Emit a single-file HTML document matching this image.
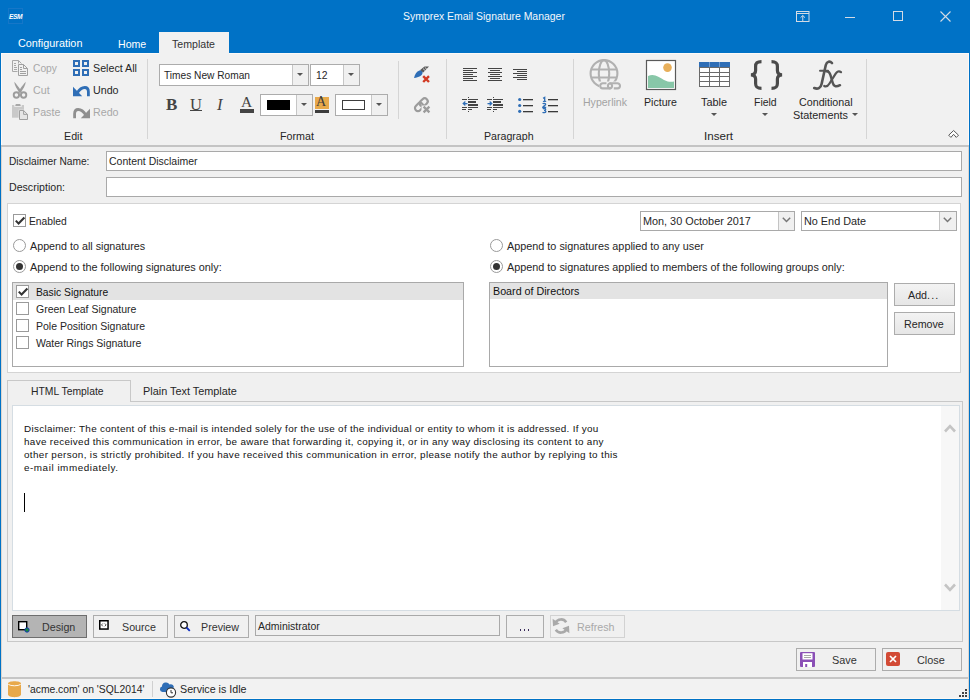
<!DOCTYPE html>
<html><head><meta charset="utf-8">
<style>
*{margin:0;padding:0;box-sizing:border-box}
html,body{width:970px;height:700px;overflow:hidden;background:#f0f0f0}
body{position:relative;font-family:"Liberation Sans",sans-serif;font-size:10.7px;color:#222}
.a{position:absolute}
.t{position:absolute;white-space:nowrap;line-height:14px;font-size:10.7px;color:#262626}
.bx{position:absolute;border:1px solid #acacac;background:#fff}
.chk{position:absolute;width:13px;height:13px;border:1px solid #9a9a9a;background:#fff}
.rad{position:absolute;width:13px;height:13px;border:1px solid #9a9a9a;border-radius:50%;background:#fff}
.sep{position:absolute;width:1px;background:#d5d5d5}
.dd{position:absolute;width:0;height:0;border-left:3px solid transparent;border-right:3px solid transparent;border-top:3px solid #555}
svg{position:absolute;overflow:visible}
</style></head><body>

<!-- window frame -->
<div class="a" style="left:0;top:0;width:970px;height:53px;background:#0072c6"></div>
<div class="a" style="left:0;top:0;width:1px;height:700px;background:#0072c6"></div>
<div class="a" style="left:969px;top:0;width:1px;height:700px;background:#0072c6"></div>
<div class="a" style="left:0;top:699px;width:970px;height:1px;background:#0072c6"></div>
<div class="a" style="left:1px;top:698px;width:968px;height:1px;background:#fcf9f4"></div>

<!-- title bar -->
<div class="a" style="left:8px;top:8px;width:15px;height:16px;background:#0070c4;border:1px solid #1677c8"></div>
<div class="t" style="left:9px;top:10px;font-size:6.6px;line-height:13px;color:#fff;font-style:italic;font-weight:bold;letter-spacing:-0.4px">ESM</div>
<div class="t" style="left:403px;top:10px;font-size:10.45px;color:#f4f7fb">Symprex Email Signature Manager</div>

<!-- ribbon tabs -->
<div class="t" style="left:18px;top:36px;font-size:10.84px;color:#fff">Configuration</div>
<div class="t" style="left:118px;top:37px;font-size:10.6px;color:#fff">Home</div>
<div class="a" style="left:159px;top:32px;width:70px;height:22px;background:#f1f1f1"></div>
<div class="t" style="left:172px;top:37px;font-size:10.6px;color:#333">Template</div>

<!-- ribbon body -->
<div class="a" style="left:1px;top:53px;width:968px;height:92px;background:#f1f1f1"></div>
<div class="a" style="left:1px;top:145px;width:968px;height:2px;background:#c4c4c4"></div>


<!-- EDIT group -->
<svg style="left:12px;top:60px" width="17" height="17" viewBox="0 0 17 17">
 <g fill="none" stroke="#a8a8a8">
 <path d="M0.5 11.5V0.5H6.5L9.5 3.5M6.5 0.5V3.5M0.5 11.5H5.5"/>
 </g>
 <g fill="#a8a8a8"><rect x="2" y="3" width="2" height="1"/><rect x="2" y="5" width="2" height="1"/><rect x="2" y="7" width="3" height="1"/><rect x="2" y="9" width="3" height="1"/></g>
 <path d="M6.5 4.5V15.5H15.5V8.5L11.5 4.5Z" fill="#f1f1f1" stroke="#a0a0a0"/>
 <path d="M11.5 4.5V8.5H15.5" fill="none" stroke="#a0a0a0"/>
 <g fill="#a0a0a0"><rect x="8" y="7" width="2" height="1"/><rect x="8" y="9" width="2" height="1"/><rect x="8" y="11" width="6" height="1"/><rect x="8" y="13" width="6" height="1"/></g>
</svg>
<svg style="left:10px;top:80px" width="20" height="20" viewBox="0 0 20 20">
 <path d="M4.2 1.8C5.8 3.2 9 7.5 11.6 11.6L9.6 13C6.8 9.2 4.6 5.2 4.2 1.8Z" fill="#9c9c9c"/>
 <path d="M15.8 1.8C14.2 3.2 11 7.5 8.4 11.6L10.4 13C13.2 9.2 15.4 5.2 15.8 1.8Z" fill="#9c9c9c"/>
 <circle cx="6.4" cy="15" r="2.7" fill="none" stroke="#9c9c9c" stroke-width="1.9"/>
 <circle cx="13.6" cy="15" r="2.7" fill="none" stroke="#9c9c9c" stroke-width="1.9"/>
</svg>
<svg style="left:12px;top:103px" width="17" height="17" viewBox="0 0 17 17">
 <rect x="0" y="2" width="12" height="12.7" fill="#c9c9c9"/>
 <rect x="2.3" y="1" width="7.4" height="2.8" fill="#f1f1f1"/>
 <path d="M3.2 3H8.8L8.2 1H3.8Z" fill="#a8a8a8"/>
 <path d="M7.5 7.5H11.6L15.5 11.4V16.5H7.5Z" fill="#e6e6e6" stroke="#f1f1f1" stroke-width="1.6"/>
 <path d="M7.5 7.5H11.6L15.5 11.4V16.5H7.5Z" fill="#e6e6e6" stroke="#a0a0a0"/>
 <path d="M11.6 7.5V11.4H15.5" fill="none" stroke="#a0a0a0"/>
</svg>
<div class="t" style="left:33px;top:62px;color:#a8a8a8;font-size:10.28px">Copy</div>
<div class="t" style="left:33px;top:83px;color:#a8a8a8">Cut</div>
<div class="t" style="left:33px;top:105px;color:#a8a8a8">Paste</div>

<svg style="left:73px;top:60px" width="16" height="16" viewBox="0 0 16 16">
 <g fill="none" stroke="#2f6eb6" stroke-width="2">
 <rect x="1" y="1" width="5" height="5"/><rect x="10" y="1" width="5" height="5"/>
 <rect x="1" y="10" width="5" height="5"/><rect x="10" y="10" width="5" height="5"/></g>
</svg>
<svg style="left:73px;top:86px" width="17" height="11" viewBox="0 0 17 11">
 <path d="M4.2 7C6.5 3.2 9.2 1.5 11.8 1.5C14.3 1.5 15.4 3.5 15.4 5.8V10.2" fill="none" stroke="#2f6eb6" stroke-width="2.8"/>
 <path d="M0 0.8V10.2H9.2Z" fill="#2f6eb6"/>
</svg>
<svg style="left:73px;top:108px" width="17" height="11" viewBox="0 0 17 11">
 <path d="M12.8 7C10.5 3.2 7.8 1.5 5.2 1.5C2.7 1.5 1.6 3.5 1.6 5.8V10.2" fill="none" stroke="#8f8f8f" stroke-width="2.8"/>
 <path d="M17 0.8V10.2H7.8Z" fill="#8f8f8f"/>
</svg>
<div class="t" style="left:93px;top:61px;font-size:10.7px">Select All</div>
<div class="t" style="left:93px;top:83px">Undo</div>
<div class="t" style="left:93px;top:105px;color:#a8a8a8">Redo</div>
<div class="t" style="left:64px;top:129px">Edit</div>
<div class="sep" style="left:147px;top:59px;height:80px"></div>

<!-- FORMAT group -->
<div class="bx" style="left:159px;top:64px;width:150px;height:22px;border-color:#acacac"></div>
<div class="a" style="left:292px;top:65px;width:16px;height:20px;background:#f0f0f0;border-left:1px solid #c6c6c6"></div>
<div class="dd" style="left:297px;top:73px"></div>
<div class="t" style="left:164px;top:69px;font-size:10.16px">Times New Roman</div>
<div class="bx" style="left:310px;top:64px;width:50px;height:22px;border-color:#acacac"></div>
<div class="a" style="left:343px;top:65px;width:16px;height:20px;background:#f0f0f0;border-left:1px solid #c6c6c6"></div>
<div class="dd" style="left:348px;top:73px"></div>
<div class="t" style="left:316px;top:69px;font-size:10.4px">12</div>

<div class="t" style="left:166px;top:96px;font-family:'Liberation Serif',serif;font-weight:bold;font-size:17px;line-height:18px;color:#444">B</div>
<div class="t" style="left:190px;top:96px;font-family:'Liberation Serif',serif;font-size:16.5px;line-height:18px;color:#444">U</div>
<div class="a" style="left:190px;top:110px;width:12px;height:1px;background:#444"></div>
<div class="t" style="left:217px;top:96px;font-family:'Liberation Serif',serif;font-style:italic;font-size:16.5px;line-height:18px;color:#444">I</div>
<div class="t" style="left:241px;top:94px;font-family:'Liberation Serif',serif;font-size:15.5px;line-height:16px;color:#444">A</div>
<div class="a" style="left:240px;top:109px;width:14px;height:4px;background:#444"></div>

<div class="bx" style="left:260px;top:94px;width:53px;height:22px;border-color:#acacac"></div>
<div class="a" style="left:267px;top:100px;width:23px;height:10px;background:#000"></div>
<div class="a" style="left:296px;top:95px;width:16px;height:20px;background:#f0f0f0;border-left:1px solid #c6c6c6"></div>
<div class="dd" style="left:301px;top:103px"></div>

<div class="a" style="left:315px;top:97px;width:14px;height:12px;background:#e8a94a"></div>
<div class="t" style="left:316px;top:95px;font-family:'Liberation Serif',serif;font-size:14px;line-height:14px;color:#3d3d3d">A</div>
<div class="a" style="left:315px;top:110px;width:14px;height:3px;background:#3d3d3d"></div>

<div class="bx" style="left:335px;top:94px;width:53px;height:22px;border-color:#acacac"></div>
<div class="a" style="left:342px;top:100px;width:23px;height:10px;border:1px solid #3d3d3d;background:#fff"></div>
<div class="a" style="left:371px;top:95px;width:16px;height:20px;background:#f0f0f0;border-left:1px solid #c6c6c6"></div>
<div class="dd" style="left:376px;top:103px"></div>

<div class="t" style="left:280px;top:129px">Format</div>
<div class="sep" style="left:398px;top:61px;height:58px"></div>

<svg style="left:413px;top:66px" width="18" height="18" viewBox="0 0 18 18">
 <path d="M1 12C1.8 8.5 3.5 5.5 6.5 4.5C8.5 4 9.8 5 9.6 6.8C9.3 9.5 6 11.5 1 12Z" fill="#2f6eb6"/>
 <path d="M7.2 4L11.5 0.6H16L10.2 6.6Z" fill="#5a5a5a"/>
 <path d="M10 2.6L12.2 4.6M11.8 1.4L13.8 3.2" stroke="#f1f1f1" stroke-width="0.8"/>
 <path d="M10.2 10.2L16 16M16 10.2L10.2 16" stroke="#d23b24" stroke-width="2.4"/>
</svg>
<svg style="left:414px;top:97px" width="17" height="17" viewBox="0 0 17 17">
 <g fill="none" stroke="#9c9c9c" stroke-width="2.2" transform="rotate(-45 7.5 7.5)">
 <rect x="-0.5" y="4.5" width="9" height="6" rx="3"/>
 <rect x="6" y="4.5" width="9" height="6" rx="3"/>
 </g>
 <path d="M7.5 8.5H17V17H7.5Z" fill="#f1f1f1"/>
 <path d="M9.6 9.6L15.4 15.4M15.4 9.6L9.6 15.4" stroke="#9c9c9c" stroke-width="2.3"/>
</svg>

<!-- PARAGRAPH group -->
<div class="sep" style="left:446px;top:59px;height:80px"></div>
<svg style="left:462px;top:68px" width="16" height="13" viewBox="0 0 16 13" shape-rendering="crispEdges">
 <g fill="#444"><rect x="1" y="0" width="14" height="1"/><rect x="1" y="2" width="10" height="1"/><rect x="1" y="4" width="14" height="1"/><rect x="1" y="6" width="10" height="1"/><rect x="1" y="8" width="14" height="1"/><rect x="1" y="10" width="10" height="1"/><rect x="1" y="12" width="14" height="1"/></g>
</svg>
<svg style="left:488px;top:68px" width="14" height="13" viewBox="0 0 14 13" shape-rendering="crispEdges">
 <g fill="#444"><rect x="0" y="0" width="14" height="1"/><rect x="2" y="2" width="10" height="1"/><rect x="0" y="4" width="14" height="1"/><rect x="2" y="6" width="10" height="1"/><rect x="0" y="8" width="14" height="1"/><rect x="2" y="10" width="10" height="1"/><rect x="0" y="12" width="14" height="1"/></g>
</svg>
<svg style="left:513px;top:69px" width="14" height="11" viewBox="0 0 14 11" shape-rendering="crispEdges">
 <g fill="#444"><rect x="0" y="0" width="14" height="1"/><rect x="4" y="2" width="10" height="1"/><rect x="0" y="4" width="14" height="1"/><rect x="4" y="6" width="10" height="1"/><rect x="0" y="8" width="14" height="1"/><rect x="4" y="10" width="10" height="1"/></g>
</svg>
<svg style="left:462px;top:97px" width="17" height="15" viewBox="0 0 17 15" shape-rendering="crispEdges">
 <g fill="#444"><rect x="6" y="0" width="1" height="1"/><rect x="0" y="2" width="5" height="1"/><rect x="6" y="2" width="10" height="1"/>
 <rect x="6" y="4" width="8" height="2"/><rect x="6" y="7" width="10" height="2"/>
 <rect x="0" y="10" width="5" height="1"/><rect x="6" y="10" width="10" height="1"/>
 <rect x="0" y="12" width="4" height="1"/><rect x="6" y="12" width="4" height="1"/><rect x="6" y="14" width="1" height="1"/></g>
 <path d="M0.3 6.5L3.3 3.8V9.2Z" fill="#2f6eb6" shape-rendering="auto"/><rect x="2" y="6" width="3.5" height="1.3" fill="#2f6eb6" shape-rendering="auto"/>
</svg>
<svg style="left:487px;top:97px" width="17" height="15" viewBox="0 0 17 15" shape-rendering="crispEdges">
 <g fill="#444"><rect x="6" y="0" width="1" height="1"/><rect x="0" y="2" width="5" height="1"/><rect x="6" y="2" width="10" height="1"/>
 <rect x="6" y="4" width="8" height="2"/><rect x="6" y="7" width="10" height="2"/>
 <rect x="0" y="10" width="5" height="1"/><rect x="6" y="10" width="10" height="1"/>
 <rect x="0" y="12" width="4" height="1"/><rect x="6" y="12" width="4" height="1"/><rect x="6" y="14" width="1" height="1"/></g>
 <path d="M5.7 6.5L2.7 3.8V9.2Z" fill="#2f6eb6" shape-rendering="auto"/><rect x="0.5" y="6" width="3.5" height="1.3" fill="#2f6eb6" shape-rendering="auto"/>
</svg>
<svg style="left:518px;top:97px" width="16" height="16" viewBox="0 0 16 16">
 <g fill="#2f6eb6"><circle cx="1.7" cy="2.5" r="1.6"/><circle cx="1.7" cy="8.5" r="1.6"/><circle cx="1.7" cy="14.3" r="1.6"/></g>
 <g fill="#3a3a3a"><rect x="5" y="2" width="10" height="1.3"/><rect x="5" y="8" width="10" height="1.3"/><rect x="5" y="14" width="10" height="1.3"/></g>
</svg>
<svg style="left:542px;top:96px" width="17" height="17" viewBox="0 0 17 17">
 <g fill="none" stroke="#2f6eb6" stroke-width="1.3">
 <path d="M1.1 2.4L2.7 1.4V5.4"/><path d="M0.9 5.4H4.2" stroke-width="1.1"/>
 <path d="M0.8 8C1.2 7 3.7 7 3.7 8.3C3.7 9.4 1 10.2 0.8 11.3H4.2"/>
 <path d="M0.8 12.9C1.6 12.2 3.7 12.3 3.7 13.5C3.7 14.3 2.8 14.4 2 14.4C3 14.4 3.9 14.7 3.9 15.6C3.9 16.9 1.3 17 0.6 16.2"/>
</g>
 <g fill="#3a3a3a"><rect x="6" y="3" width="10" height="1.3"/><rect x="6" y="9" width="10" height="1.3"/><rect x="6" y="15" width="10" height="1.3"/></g>
</svg>
<div class="t" style="left:484px;top:129px;font-size:10.62px">Paragraph</div>
<div class="sep" style="left:573px;top:59px;height:80px"></div>

<!-- INSERT group -->
<svg style="left:589px;top:59px" width="32" height="32" viewBox="0 0 32 32">
 <g fill="none" stroke="#b1b1b1" stroke-width="2.1">
 <circle cx="15" cy="14.5" r="13.4"/>
 <ellipse cx="15" cy="14.5" rx="5.2" ry="13.4"/>
 <path d="M2 10.5H28M2 18.5H28"/>
 </g>
 <path d="M10 31.5V22.5H32V31.5Z" fill="#f1f1f1"/>
 <g fill="none" stroke="#b1b1b1" stroke-width="2.1">
 <path d="M17.5 24.2H13.8A2.6 2.6 0 0 0 13.8 29.4H20.5A2.6 2.6 0 0 0 20.5 24.2"/>
 <path d="M24.8 29.4H28.4A2.6 2.6 0 0 0 28.4 24.2H21.5A2.6 2.6 0 0 0 21.5 29.4"/>
 </g>
</svg>
<div class="t" style="left:583px;top:95px;color:#a3a3a3;font-size:10.56px">Hyperlink</div>

<svg style="left:645px;top:59px" width="32" height="32" viewBox="0 0 32 32">
 <rect x="1.5" y="1.5" width="29" height="29" fill="#fff" stroke="#5a5a5a" stroke-width="1.2"/>
 <path d="M3 17C9 14 14 18 19 21C23 23 26 23 29 22.5V29H3Z" fill="#88c7a8"/>
 <circle cx="22.5" cy="8.6" r="4.3" fill="#e8af5a"/>
</svg>
<div class="t" style="left:644px;top:95px;font-size:10.6px">Picture</div>

<svg style="left:698px;top:62px" width="33" height="26" viewBox="0 0 33 26" shape-rendering="crispEdges">
 <rect x="1" y="0" width="31" height="5" fill="#2f6eb6"/>
 <rect x="2" y="5" width="29" height="19" fill="#fff"/>
 <g fill="#6a6a6a"><rect x="1" y="5" width="31" height="1"/><rect x="1" y="10" width="31" height="1"/><rect x="1" y="14" width="31" height="1"/><rect x="1" y="19" width="31" height="1"/><rect x="1" y="24" width="31" height="1"/>
 <rect x="1" y="5" width="1" height="20"/><rect x="31" y="5" width="1" height="20"/>
 <rect x="11" y="5" width="1" height="20"/><rect x="21" y="5" width="1" height="20"/></g>
 <g fill="#6e9bd2"><rect x="11" y="0" width="1" height="5"/><rect x="21" y="0" width="1" height="5"/></g>
</svg>
<div class="t" style="left:701px;top:95px;font-size:10.88px">Table</div>
<div class="dd" style="left:711px;top:113px"></div>

<svg style="left:750px;top:60px" width="33" height="30" viewBox="0 0 33 30">
 <g fill="none" stroke="#4a4a4a" stroke-width="3.2">
 <path d="M11.5 1.6C7 1.6 5.6 3 5.6 6.5V10.5C5.6 13 4.5 14.5 1 14.8C4.5 15.1 5.6 16.6 5.6 19V23.5C5.6 27 7 28.4 11.5 28.4"/>
 <path d="M21.5 1.6C26 1.6 27.4 3 27.4 6.5V10.5C27.4 13 28.5 14.5 32 14.8C28.5 15.1 27.4 16.6 27.4 19V23.5C27.4 27 26 28.4 21.5 28.4"/>
 </g>
</svg>
<div class="t" style="left:754px;top:96px;font-size:10.47px">Field</div>
<div class="dd" style="left:762px;top:113px"></div>

<svg style="left:812px;top:60px" width="31" height="31" viewBox="0 0 31 31">
 <g fill="none" stroke="#555" stroke-linecap="round">
 <path d="M20 3C18 0.8 14.8 1.2 13.8 5L9.6 24C8.8 28 5.8 29.5 2.2 28" stroke-width="2.6"/>
 <path d="M8 10.8H16" stroke-width="2"/>
 <path d="M14 11.2C16.5 11 17.8 12.5 18.6 15.5L20.6 22.5C21.6 26.5 24 27.2 28 25.2" stroke-width="2.5"/>
 <path d="M29 12.2C27 10.6 25 11.5 23.5 13.8L17.5 23.5C16 26 14 27 12.2 26" stroke-width="2.2"/>
 </g>
</svg>
<div class="t" style="left:799px;top:95px;font-size:10.71px">Conditional</div>
<div class="t" style="left:793px;top:108px;font-size:10.87px">Statements</div>
<div class="dd" style="left:852px;top:113px"></div>
<div class="t" style="left:704px;top:129px;font-size:11.6px">Insert</div>
<div class="sep" style="left:866px;top:59px;height:80px"></div>
<svg style="left:948px;top:130px" width="12" height="9" viewBox="0 0 12 9">
 <path d="M0.7 5.2L5.6 0.5L10.5 5.2L8.3 7.4L5.6 4.3L2.9 7.4Z" fill="#fff" stroke="#555" stroke-width="1"/>
</svg>

<!-- FORM -->
<div class="t" style="left:9px;top:155px;font-size:10.2px">Disclaimer Name:</div>
<div class="bx" style="left:106px;top:151px;width:856px;height:20px;border-color:#a9a9a9"></div>
<div class="t" style="left:109px;top:155px;font-size:10.49px">Content Disclaimer</div>
<div class="t" style="left:9px;top:180px;font-size:10.61px">Description:</div>
<div class="bx" style="left:106px;top:177px;width:856px;height:20px;border-color:#a9a9a9"></div>

<div class="a" style="left:7px;top:203px;width:954px;height:170px;background:#fff;border:1px solid #d4d4d4"></div>
<div class="chk" style="left:13px;top:214px"></div>
<svg style="left:15px;top:217px" width="10" height="8" viewBox="0 0 10 8"><path d="M0.8 3.6L3.6 6.6L9.4 0.6" fill="none" stroke="#333" stroke-width="2.1"/></svg>
<div class="t" style="left:29px;top:215px;font-size:10.3px">Enabled</div>

<div class="rad" style="left:13px;top:239px"></div>
<div class="t" style="left:30px;top:239px;font-size:10.74px">Append to all signatures</div>
<div class="rad" style="left:13px;top:260px"></div>
<div class="a" style="left:16px;top:263px;width:7px;height:7px;border-radius:50%;background:#333"></div>
<div class="t" style="left:30px;top:260px;font-size:10.85px">Append to the following signatures only:</div>

<div class="a" style="left:12px;top:282px;width:452px;height:85px;background:#fff;border:1px solid #a9a9a9"></div>
<div class="a" style="left:13px;top:283px;width:450px;height:17px;background:#e3e3e3"></div>
<div class="chk" style="left:16px;top:285px"></div>
<svg style="left:18px;top:288px" width="10" height="8" viewBox="0 0 10 8"><path d="M0.8 3.6L3.6 6.6L9.4 0.6" fill="none" stroke="#333" stroke-width="2.1"/></svg>
<div class="t" style="left:36px;top:286px;font-size:10.31px;color:#111">Basic Signature</div>
<div class="chk" style="left:16px;top:302px"></div>
<div class="t" style="left:36px;top:302px;font-size:10.5px">Green Leaf Signature</div>
<div class="chk" style="left:16px;top:319px"></div>
<div class="t" style="left:36px;top:319px;font-size:10.5px">Pole Position Signature</div>
<div class="chk" style="left:16px;top:336px"></div>
<div class="t" style="left:36px;top:336px;font-size:10.5px">Water Rings Signature</div>

<div class="bx" style="left:640px;top:211px;width:155px;height:20px;border-color:#a9a9a9"></div>
<div class="a" style="left:778px;top:212px;width:16px;height:18px;background:#f0f0f0;border-left:1px solid #c4c4c4"></div>
<svg style="left:782px;top:217px" width="9" height="6" viewBox="0 0 9 6"><path d="M0.8 0.8L4.5 4.5L8.2 0.8" fill="none" stroke="#777" stroke-width="1.5"/></svg>
<div class="t" style="left:643px;top:214px;font-size:10.85px">Mon, 30 October 2017</div>
<div class="bx" style="left:801px;top:211px;width:156px;height:20px;border-color:#a9a9a9"></div>
<div class="a" style="left:939px;top:212px;width:17px;height:18px;background:#f0f0f0;border-left:1px solid #c4c4c4"></div>
<svg style="left:943px;top:217px" width="9" height="6" viewBox="0 0 9 6"><path d="M0.8 0.8L4.5 4.5L8.2 0.8" fill="none" stroke="#777" stroke-width="1.5"/></svg>
<div class="t" style="left:804px;top:214px;font-size:10.85px">No End Date</div>

<div class="rad" style="left:490px;top:239px"></div>
<div class="t" style="left:507px;top:239px;font-size:10.83px">Append to signatures applied to any user</div>
<div class="rad" style="left:490px;top:260px"></div>
<div class="a" style="left:493px;top:263px;width:7px;height:7px;border-radius:50%;background:#333"></div>
<div class="t" style="left:507px;top:260px;font-size:10.83px">Append to signatures applied to members of the following groups only:</div>

<div class="a" style="left:489px;top:282px;width:399px;height:85px;background:#fff;border:1px solid #a9a9a9"></div>
<div class="a" style="left:490px;top:283px;width:397px;height:16px;background:#e3e3e3"></div>
<div class="t" style="left:493px;top:284px;font-size:10.72px;color:#111">Board of Directors</div>

<div class="a" style="left:894px;top:283px;width:61px;height:23px;border:1px solid #acacac;background:linear-gradient(#f3f3f3,#e6e6e6)"></div>
<div class="t" style="left:908px;top:288px;font-size:10.7px">Add<span style="letter-spacing:1.2px">...</span></div>
<div class="a" style="left:894px;top:312px;width:61px;height:23px;border:1px solid #acacac;background:linear-gradient(#f3f3f3,#e6e6e6)"></div>
<div class="t" style="left:904px;top:317px;font-size:10.7px">Remove</div>

<!-- TABS / EDITOR -->
<div class="a" style="left:7px;top:401px;width:956px;height:241px;border:1px solid #c8c8c8;border-top-color:#c8c8c8;background:#f0f0f0"></div>
<div class="a" style="left:7px;top:380px;width:124px;height:22px;background:#f0f0f0;border:1px solid #c8c8c8;border-bottom:none"></div>
<div class="t" style="left:31px;top:385px;font-size:10.37px">HTML Template</div>
<div class="t" style="left:143px;top:384px;font-size:10.89px">Plain Text Template</div>

<div class="a" style="left:12px;top:405px;width:948px;height:206px;background:#fff;border:1px solid #d5dde3"></div>
<div class="a" style="left:941px;top:406px;width:18px;height:204px;background:#f7f7f7"></div>
<svg style="left:944px;top:424px" width="12" height="9" viewBox="0 0 12 9"><path d="M1 7.5L6 2.2L11 7.5" fill="none" stroke="#c4c4c4" stroke-width="2.6"/></svg>
<svg style="left:944px;top:583px" width="12" height="9" viewBox="0 0 12 9"><path d="M1 1.5L6 6.8L11 1.5" fill="none" stroke="#c4c4c4" stroke-width="2.6"/></svg>

<div class="t" style="left:24px;top:422px;font-size:9.9px;line-height:13px;color:#111;letter-spacing:0.303px">Disclaimer: The content of this e-mail is intended solely for the use of the individual or entity to whom it is addressed. If you</div>
<div class="t" style="left:24px;top:435px;font-size:9.9px;line-height:13px;color:#111;letter-spacing:0.325px">have received this communication in error, be aware that forwarding it, copying it, or in any way disclosing its content to any</div>
<div class="t" style="left:24px;top:448px;font-size:9.9px;line-height:13px;color:#111;letter-spacing:0.353px">other person, is strictly prohibited. If you have received this communication in error, please notify the author by replying to this</div>
<div class="t" style="left:24px;top:461px;font-size:9.9px;line-height:13px;color:#111;letter-spacing:0.537px">e-mail immediately.</div>

<div class="a" style="left:24px;top:493px;width:1px;height:19px;background:#000"></div>

<!-- editor bottom bar -->
<div class="a" style="left:12px;top:615px;width:75px;height:23px;background:#b4b4b4;border:1px solid #6e6e6e"></div>
<svg style="left:18px;top:621px" width="12" height="12" viewBox="0 0 12 12">
 <rect x="0.7" y="0.7" width="8" height="8" fill="#fff" stroke="#000" stroke-width="1.4"/>
 <circle cx="9" cy="9" r="2.2" fill="#1a8a3a" stroke="#1030c0" stroke-width="0.9"/>
</svg>
<div class="t" style="left:42px;top:620px;font-size:10.7px;color:#333">Design</div>

<div class="a" style="left:93px;top:615px;width:75px;height:23px;background:#f0f0f0;border:1px solid #acacac"></div>
<svg style="left:99px;top:620px" width="10" height="10" viewBox="0 0 10 10">
 <rect x="0.75" y="0.75" width="8.3" height="8.3" fill="#fff" stroke="#000" stroke-width="1.5"/>
 <path d="M3.8 3.5L2.5 4.9L3.8 6.3M5.8 3.5L7.1 4.9L5.8 6.3" fill="none" stroke="#222" stroke-width="0.8"/>
</svg>
<div class="t" style="left:122px;top:620px;font-size:10.7px;color:#333">Source</div>

<div class="a" style="left:174px;top:615px;width:75px;height:23px;background:#f0f0f0;border:1px solid #acacac"></div>
<svg style="left:180px;top:621px" width="11" height="11" viewBox="0 0 11 11">
 <circle cx="4" cy="4" r="3.3" fill="#fff" stroke="#111" stroke-width="1.3"/>
 <path d="M6.5 6.5L9.8 9.8" stroke="#1030c0" stroke-width="1.8"/>
</svg>
<div class="t" style="left:201px;top:620px;font-size:10.7px;color:#333">Preview</div>

<div class="a" style="left:255px;top:615px;width:245px;height:21px;background:#f0f0f0;border:1px solid #a9a9a9"></div>
<div class="t" style="left:258px;top:619px;font-size:10.5px">Administrator</div>
<div class="a" style="left:506px;top:615px;width:38px;height:23px;background:#f0f0f0;border:1px solid #acacac"></div>
<div class="a" style="left:520px;top:629px;width:1px;height:2px;background:#3a2a5a;box-shadow:4px 0 0 #3a2a5a,8px 0 0 #3a2a5a"></div>
<div class="a" style="left:550px;top:615px;width:75px;height:23px;background:#f0f0f0;border:1px solid #d2d2d2"></div>
<svg style="left:552px;top:617px" width="18" height="18" viewBox="0 0 18 18">
 <path d="M14.2 5.2A6.3 6.3 0 0 0 3.4 5.8M3.8 12.8A6.3 6.3 0 0 0 14.6 12.2" fill="none" stroke="#a9a9a9" stroke-width="2.6"/>
 <path d="M0.6 1.8L1 9.2L7.6 6.8Z" fill="#a9a9a9"/>
 <path d="M17.4 16.2L17 8.8L10.4 11.2Z" fill="#a9a9a9"/>
</svg>
<div class="t" style="left:577px;top:620px;font-size:10.7px;color:#a9a9a9">Refresh</div>

<!-- Save / Close -->
<div class="a" style="left:796px;top:648px;width:80px;height:23px;background:#f0f0f0;border:1px solid #acacac"></div>
<svg style="left:800px;top:652px" width="15" height="15" viewBox="0 0 15 15">
 <rect x="0" y="0" width="15" height="15" rx="1" fill="#8b50b6"/>
 <rect x="2.5" y="1.2" width="10" height="6.3" fill="#fff"/>
 <rect x="4" y="3" width="7" height="1" fill="#a7a7a7"/>
 <rect x="4" y="5" width="7" height="1" fill="#a7a7a7"/>
 <rect x="3" y="10" width="9" height="5" fill="#fff"/>
 <rect x="5.2" y="12" width="2" height="3" fill="#8b50b6"/>
</svg>
<div class="t" style="left:832px;top:653px;font-size:10.9px;color:#333">Save</div>
<div class="a" style="left:882px;top:648px;width:80px;height:23px;background:#f0f0f0;border:1px solid #acacac"></div>
<svg style="left:886px;top:652px" width="15" height="15" viewBox="0 0 15 15">
 <rect x="0" y="0" width="14" height="14" rx="2" fill="#d24a35"/>
 <path d="M4 4L10 10M10 4L4 10" stroke="#fff" stroke-width="1.7"/>
</svg>
<div class="t" style="left:917px;top:653px;font-size:10.9px;color:#333">Close</div>

<!-- status bar -->
<div class="a" style="left:1px;top:677px;width:968px;height:2px;background:#c6c6c6"></div>
<div class="a" style="left:1px;top:679px;width:968px;height:19px;background:#f2f2f2"></div>
<svg style="left:8px;top:681px" width="14" height="17" viewBox="0 0 14 17">
 <path d="M0 2.6C0 -0.6 13 -0.6 13 2.6V13.6C13 17 0 17 0 13.6Z" fill="#e8a94a"/>
 <path d="M0.3 3.4C2.5 5.2 10.5 5.2 12.7 3.4" fill="none" stroke="#fff" stroke-width="0.9"/>
</svg>
<div class="t" style="left:28px;top:683px;font-size:10.33px">'acme.com' on 'SQL2014'</div>
<div class="a" style="left:152px;top:681px;width:1px;height:16px;background:#d0d0d0"></div>
<svg style="left:160px;top:681px" width="17" height="17" viewBox="0 0 17 17">
 <path d="M2.5 11A2.8 2.8 0 0 1 2 5.5A4 4 0 0 1 9.5 3.5A3 3 0 0 1 13.5 7.5A2.5 2.5 0 0 1 13 11Z" fill="#2f6eb6"/>
 <circle cx="11" cy="11.5" r="4.6" fill="#fff" stroke="#333" stroke-width="1.1"/>
 <path d="M11 9V11.8H13" fill="none" stroke="#333" stroke-width="1"/>
</svg>
<div class="t" style="left:180px;top:682px;font-size:10.7px">Service is Idle</div>
<svg style="left:958px;top:688px" width="10" height="10" viewBox="0 0 10 10" shape-rendering="crispEdges">
 <g fill="#444"><rect x="7" y="1" width="2" height="2"/><rect x="4" y="4" width="2" height="2"/><rect x="7" y="4" width="2" height="2"/><rect x="1" y="7" width="2" height="2"/><rect x="4" y="7" width="2" height="2"/><rect x="7" y="7" width="2" height="2"/></g>
</svg>

<!-- title bar buttons -->
<svg style="left:796px;top:11px" width="14" height="11" viewBox="0 0 14 11">
 <rect x="0.5" y="0.5" width="12.5" height="10" fill="none" stroke="#d3dbe5"/>
 <path d="M1 2.5H13" stroke="#d3dbe5"/>
 <path d="M6.75 10V4.5M4.5 6.7L6.75 4.5L9 6.7" fill="none" stroke="#d3dbe5"/>
</svg>
<div class="a" style="left:845px;top:17px;width:10px;height:1px;background:#d3dbe5"></div>
<div class="a" style="left:893px;top:11px;width:10px;height:10px;border:1px solid #d3dbe5"></div>
<svg style="left:940px;top:11px" width="11" height="11" viewBox="0 0 11 11"><path d="M0.5 0.5L10.5 10.5M10.5 0.5L0.5 10.5" stroke="#d3dbe5" stroke-width="1.1"/></svg>
<div class="a" style="left:1px;top:53px;width:968px;height:1px;background:#fcf9f7"></div>
<div class="a" style="left:1px;top:53px;width:1px;height:92px;background:#fcf9f7"></div>
<div class="a" style="left:968px;top:53px;width:1px;height:92px;background:#fcf9f7"></div>
<div class="a" style="left:1px;top:147px;width:1px;height:551px;background:#dcd5ce"></div>
<div class="a" style="left:968px;top:147px;width:1px;height:551px;background:#dcd5ce"></div>
<div class="a" style="left:159px;top:53px;width:70px;height:1px;background:#f1f1f1"></div>
</body></html>
